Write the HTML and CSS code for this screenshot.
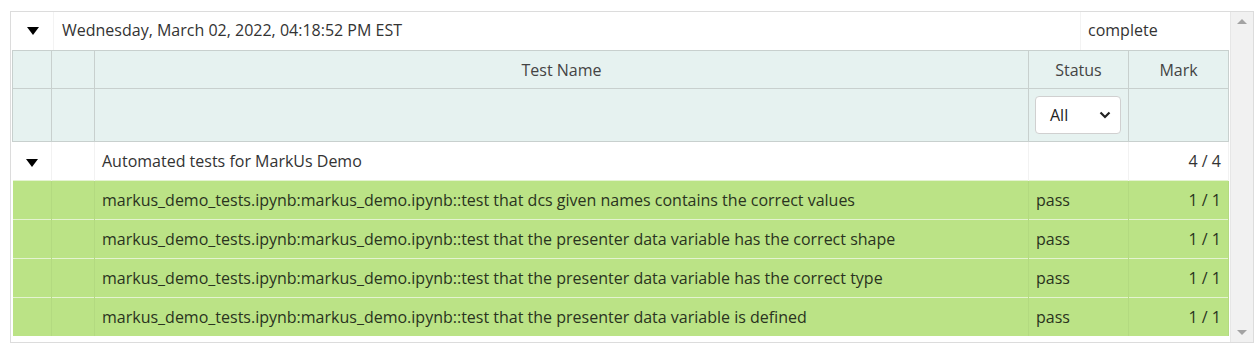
FILE: index.html
```html
<!DOCTYPE html>
<html lang="en">
<head>
    <meta charset="UTF-8">
    <title>Test Results</title>
    <link rel="stylesheet" href="styles.css">
</head>
<body>

<div class="panel">
    <div class="scroll-area">
        <div class="run-row">
            <div class="run-toggle"><span class="caret"></span></div>
            <div class="run-date">Wednesday, March 02, 2022, 04:18:52 PM EST</div>
            <div class="run-status">complete</div>
        </div>

        <table class="results">
            <colgroup>
                <col class="c-toggle">
                <col class="c-blank">
                <col class="c-name">
                <col class="c-status">
                <col class="c-mark">
            </colgroup>
            <thead>
                <tr class="head-row">
                    <th></th>
                    <th></th>
                    <th>Test Name</th>
                    <th>Status</th>
                    <th>Mark</th>
                </tr>
                <tr class="filter-row">
                    <th></th>
                    <th></th>
                    <th></th>
                    <th>
                        <div class="select">All
                            <svg width="12" height="8" viewBox="0 0 12 8"><path d="M1.5 1.5 L6 6 L10.5 1.5" fill="none" stroke="#222" stroke-width="2.2"/></svg>
                        </div>
                    </th>
                    <th></th>
                </tr>
            </thead>
            <tbody>
                <tr class="group-row">
                    <td class="center"><span class="caret"></span></td>
                    <td></td>
                    <td>Automated tests for MarkUs Demo</td>
                    <td></td>
                    <td class="num">4 / 4</td>
                </tr>
                <tr class="pass">
                    <td></td><td></td>
                    <td>markus_demo_tests.ipynb:markus_demo.ipynb::test that dcs given names contains the correct values</td>
                    <td>pass</td>
                    <td class="num">1 / 1</td>
                </tr>
                <tr class="pass">
                    <td></td><td></td>
                    <td>markus_demo_tests.ipynb:markus_demo.ipynb::test that the presenter data variable has the correct shape</td>
                    <td>pass</td>
                    <td class="num">1 / 1</td>
                </tr>
                <tr class="pass">
                    <td></td><td></td>
                    <td>markus_demo_tests.ipynb:markus_demo.ipynb::test that the presenter data variable has the correct type</td>
                    <td>pass</td>
                    <td class="num">1 / 1</td>
                </tr>
                <tr class="pass">
                    <td></td><td></td>
                    <td>markus_demo_tests.ipynb:markus_demo.ipynb::test that the presenter data variable is defined</td>
                    <td>pass</td>
                    <td class="num">1 / 1</td>
                </tr>
            </tbody>
        </table>
    </div>
    <div class="scrollbar">
        <span class="arrow up"></span>
        <span class="arrow down"></span>
    </div>
</div>

</body>
</html>
```

FILE: styles.css
```css
body {
    margin: 0;
    padding: 11px 2px 0 10px;
    font-family: "Open Sans", Arial, sans-serif;
    font-size: 16px;
    color: #333;
    background: #fff;
}
.panel {
    display: flex;
    width: 1242px;
    height: 330px;
    border: 1px solid #dcdcdc;
}
.scroll-area {
    width: 1219px;
    padding-left: 1px;
}
.run-row {
    display: flex;
    height: 38px;
    align-items: stretch;
}
.run-toggle {
    width: 41px;
    display: flex;
    align-items: center;
    justify-content: center;
    border-right: 1px solid #f3f3f3;
}
.run-date {
    flex: 1;
    display: flex;
    align-items: center;
    padding-left: 8px;
    padding-bottom: 2px;
}
.run-status {
    width: 142px;
    display: flex;
    align-items: center;
    padding-left: 7px;
    padding-bottom: 2px;
    border-left: 1px solid #f3f3f3;
}
.caret {
    display: inline-block;
    width: 0;
    height: 0;
    border-left: 6px solid transparent;
    border-right: 6px solid transparent;
    border-top: 8px solid #000;
}
.results {
    border-collapse: collapse;
    table-layout: fixed;
    width: 1217px;
}
.c-toggle { width: 39px; }
.c-blank { width: 43px; }
.c-status { width: 100px; }
.c-mark { width: 100px; }
.results th {
    background: #e6f2f0;
    border: 1px solid #c8d0ce;
    font-weight: normal;
    color: #444;
    padding: 0;
}
.head-row th {
    height: 37px;
}
.filter-row th {
    height: 52px;
}
.select {
    display: flex;
    align-items: center;
    justify-content: space-between;
    box-sizing: border-box;
    width: 86px;
    height: 38px;
    margin-left: 6px;
    padding: 0 9px 0 14px;
    background: #fff;
    border: 1px solid #d0d0d0;
    border-radius: 4px;
    color: #222;
    text-align: left;
}
.results td {
    padding: 0 7px;
    height: 38px;
    white-space: nowrap;
    border-right: 1px solid #f2f2f2;
}
.results td.center {
    text-align: center;
    padding: 0;
}
.results td.num {
    text-align: right;
}
.group-row td {
    background: #fff;
}
.pass td {
    background: #bbe386;
    border-top: 1px solid #e4f3d0;
    border-right: 1px solid #b3da80;
    color: #2a3320;
}
.scrollbar {
    width: 22px;
    background: #f1f1f1;
    border-left: 1px solid #e6e6e6;
    display: flex;
    flex-direction: column;
    justify-content: space-between;
    align-items: center;
    padding: 7px 0;
}
.arrow {
    width: 0;
    height: 0;
    border-left: 5px solid transparent;
    border-right: 5px solid transparent;
}
.arrow.up { border-bottom: 5px solid #a3a3a3; }
.arrow.down { border-top: 5px solid #a3a3a3; }
```
